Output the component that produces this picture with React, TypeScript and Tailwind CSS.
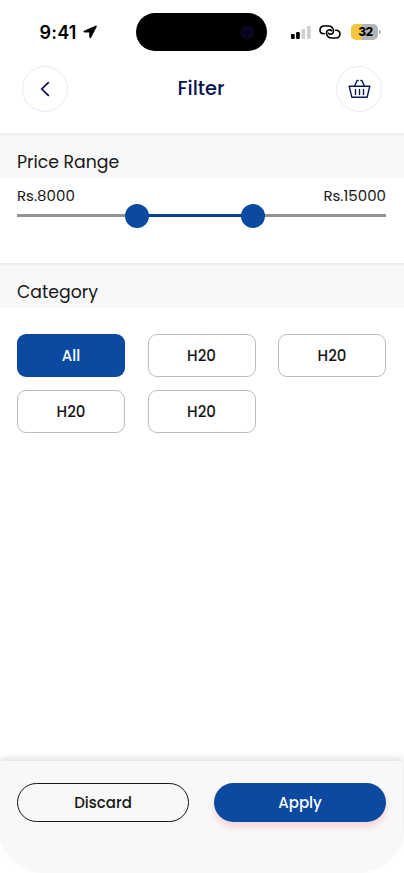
import React, { FC, useState } from "react";

type SectionTitleProps = {
  title: string;
};

type CategoryButtonProps = {
  label: string;
  selected: boolean;
  onSelect: () => void;
};

const categories = ["All", "H20", "H20", "H20", "H20"];

// slider thumbs, in percent of the track
const range = { from: 32.4, to: 63.9 };

const StatusBar: FC = () => {
  return (
    <div className="flex h-[51px] shrink-0 pt-[13px] font-['Inter',sans-serif]">
      <div className="flex h-[38px] w-[136px] items-center gap-[5px] pl-[39.5px]">
        <span className="w-[38px] whitespace-nowrap text-[18px] font-semibold tracking-[0.2px] text-black">
          9:41
        </span>
        <svg width="14" height="14" viewBox="0 0 14 14" className="shrink-0">
          <path
            d="M12.9 1 1.2 6.1c-.6.3-.5 1 .2 1h5.2l.1 5.2c0 .7.8.8 1.1.2L13.4 1.5c.2-.4-.1-.7-.5-.5Z"
            fill="#000"
            stroke="#000"
            strokeWidth="0.8"
          />
        </svg>
      </div>
      <div className="flex h-[38px] w-[131px] items-center justify-end rounded-full bg-black pr-[13px]">
        <div className="h-[13px] w-[13px] rounded-full border border-[#15102e] bg-[#08041f]" />
      </div>
      <div className="flex h-[38px] items-center pl-[23px]">
        <svg width="22" height="14" viewBox="0 0 22 14">
          <rect x="1" y="9" width="3.7" height="5" rx="1" fill="#000" />
          <rect x="6.1" y="7" width="3.7" height="7" rx="1" fill="#000" />
          <rect x="11.5" y="4" width="3.7" height="10" rx="1" fill="#d0d0d0" />
          <rect x="17" y="1" width="3.7" height="13" rx="1" fill="#d0d0d0" />
        </svg>
        <svg
          width="22"
          height="14"
          viewBox="0 0 22 14"
          fill="none"
          stroke="#000"
          strokeWidth="1.6"
          strokeLinecap="round"
          className="ml-[7px]"
        >
          <path d="M5.300 8.700C2.500 8.700 1 7 1 4.900 1 2.700 2.800 1 5 1h4.700c2.200 0 4.200 1.800 4.800 4.200.4 2-1 3.900-3 3.900-1 0-1.700-.4-2.100-.9" />
          <path d="M16.700 5.300c2.800 0 4.300 1.700 4.300 3.800 0 2.200-1.800 3.900-4 3.900h-4.700c-2.200 0-4.200-1.800-4.800-4.200-.4-2 1-3.900 3-3.900 1 0 1.700.4 2.100.9" />
        </svg>
        <div className="ml-[10px] flex h-4 w-[27px] items-center justify-center rounded-[5px] bg-linear-to-r from-[#f3c73b] from-40% to-[#b5b5b5] to-40% pl-[2px] text-xs font-extrabold tracking-[-0.6px] text-black">
          32
        </div>
        <div className="ml-px h-1 w-[1.5px] rounded-r bg-[#b5b5b5]" />
      </div>
    </div>
  );
};

const Header: FC = () => {
  return (
    <header className="flex h-[82px] shrink-0 items-start justify-between pt-[15px] pr-[22px] pl-[22px]">
      <button className="flex h-[46px] w-[46px] items-center justify-center rounded-full border border-[#e7e9f7]">
        <svg width="10" height="16" viewBox="0 0 10 16" fill="none">
          <path d="M8.800 1.200 1.800 8l7 6.800" stroke="#0c0c4b" strokeWidth="1.700" />
        </svg>
      </button>
      <h1 className="pt-[8px] pr-[2px] text-[19.500px] leading-[30px] font-medium text-[#091350]">
        Filter
      </h1>
      <button className="flex h-[46px] w-[46px] items-center justify-center rounded-full border border-[#e4edf5]">
        <svg
          width="23"
          height="20"
          viewBox="0 0 23 20"
          fill="none"
          stroke="#0c1751"
          strokeWidth="1.400"
          strokeLinejoin="round"
          strokeLinecap="round"
        >
          <path d="M1 7.200h21M1.200 7.200l2.700 11.100h15.200l2.700-11.100M6.500 7.200l2.600-5.700h1M16.500 7.200l-2.600-5.700h-1" />
          <path d="M7.500 10.500v5M11.500 10.500v5M15.500 10.500v5" />
        </svg>
      </button>
    </header>
  );
};

const SectionTitle: FC<SectionTitleProps> = ({ title }) => {
  return (
    <div className="h-[45px] shrink-0 bg-[#f8f8f8] pt-[15px] pl-[17px] shadow-[inset_0_3px_2px_-1px_#ececec]">
      <h2 className="text-[17.300px] leading-[28px] text-[#171717]">{title}</h2>
    </div>
  );
};

const PriceSlider: FC = () => {
  return (
    <div className="h-[85px] shrink-0 px-[17px] pt-[7px]">
      <div className="mr-px flex justify-between text-[15px] leading-[22px] text-[#171717]">
        <span>Rs.8000</span>
        <span>Rs.15000</span>
      </div>
      <div className="relative mt-[7px] mr-px h-[3px] bg-[#929292]">
        <div
          className="absolute h-[3px] bg-[#0a3f94]"
          style={{ left: `${range.from}%`, right: `${100 - range.to}%` }}
        />
        {[range.from, range.to].map((value) => (
          <div
            key={value}
            className="absolute top-[-10.500px] h-6 w-6 -translate-x-1/2 rounded-full bg-[#0b4aa0]"
            style={{ left: `${value}%` }}
          />
        ))}
      </div>
    </div>
  );
};

const CategoryButton: FC<CategoryButtonProps> = (props) => {
  const { label, selected, onSelect } = props;

  return (
    <button
      className={
        selected
          ? "h-[43px] w-[108px] rounded-[9px] bg-[#0b4aa0] pt-[2px] text-[15px] font-medium text-white"
          : "h-[43px] w-[108px] rounded-[9px] border border-[#bdbdbd] bg-white pt-[2px] text-[15px] font-medium text-[#171717]"
      }
      onClick={onSelect}
    >
      {label}
    </button>
  );
};

export default function App() {
  const [selected, setSelected] = useState(0);

  return (
    <div className="flex h-[873px] w-[404px] flex-col overflow-hidden bg-white font-['Poppins','Inter',sans-serif]">
      <StatusBar />
      <Header />
      <SectionTitle title="Price Range" />
      <PriceSlider />
      <SectionTitle title="Category" />
      <div className="flex flex-1 flex-wrap content-start gap-x-[22.500px] gap-y-[13px] pt-[26px] pl-[17px]">
        {categories.map((category, index) => (
          <CategoryButton
            key={index}
            label={category}
            selected={selected === index}
            onSelect={() => setSelected(index)}
          />
        ))}
      </div>
      <footer className="flex h-28 w-[403px] shrink-0 justify-between rounded-b-[48px] bg-[#f8f8f8] pt-[22px] pr-[17px] pl-[17px] shadow-[0_-3px_6px_rgba(0,0,0,0.120)]">
        <button className="h-[39px] w-[172px] rounded-full border border-[#171717] pt-px text-[15px] font-medium text-[#171717]">
          Discard
        </button>
        <button className="h-[39px] w-[172px] rounded-full bg-[#0b4aa0] pt-[2px] text-[15px] font-medium text-white shadow-[0_5px_6px_rgba(255,60,80,0.180)]">
          Apply
        </button>
      </footer>
    </div>
  );
}
